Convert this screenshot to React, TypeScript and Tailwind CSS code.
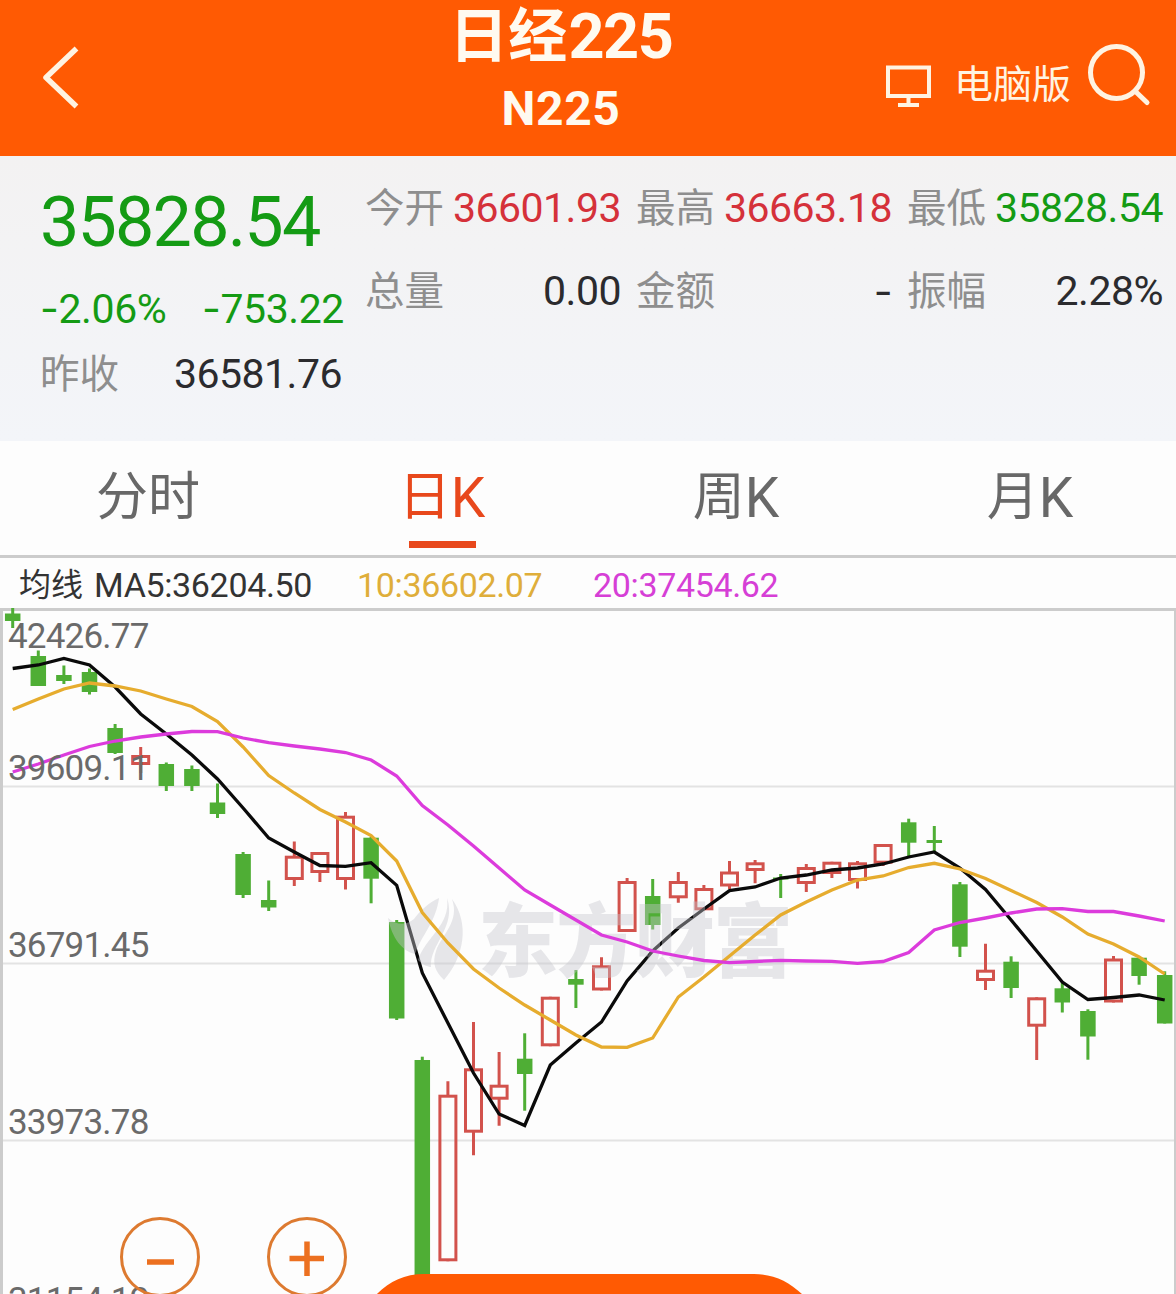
import { useState } from "react";
import clsx from "clsx";

type Candle = [high: number, top: number, bottom: number, low: number, rising?: boolean];

const STEP = 25.6;
const START = 12.7;
const CHART_TOP = 608;

const candles: Candle[] = [
  [608, 613.5, 621, 628],
  [650.5, 656, 686, 686],
  [665.5, 675, 681, 684],
  [668.5, 672, 692, 694.5],
  [724, 728, 753, 754],
  [747, 755, 765, 773, true],
  [762.5, 764, 786, 791],
  [765.5, 769, 786, 791],
  [783.5, 802.5, 814, 818],
  [852, 854, 895, 898],
  [880.5, 900, 907.5, 911],
  [841.5, 855.7, 880, 886, true],
  [852, 852, 873, 882, true],
  [812, 815.7, 880, 889.5, true],
  [837, 837.7, 878.7, 903.3],
  [920, 922, 1018.5, 1020],
  [1056.7, 1060, 1300, 1300],
  [1081.3, 1094.7, 1261.3, 1261.3, true],
  [1022, 1068.3, 1132.7, 1155.3, true],
  [1052, 1084.7, 1099.7, 1125.7, true],
  [1033.3, 1058.7, 1074, 1110.7],
  [996.7, 996.7, 1046.3, 1046.3, true],
  [970, 979, 984.7, 1008],
  [957.3, 965.3, 990.5, 990.5, true],
  [878, 881, 932, 932, true],
  [879, 896, 925, 929.5],
  [872, 881, 898.3, 902.7, true],
  [885, 888, 910.3, 910.3, true],
  [861, 871.5, 886.5, 889, true],
  [860, 862.3, 871, 883.3, true],
  [874, 877.5, 879.5, 898],
  [864, 867, 884, 892, true],
  [861.7, 861.7, 874, 878, true],
  [861, 862.3, 881, 888.5, true],
  [844, 844, 863.7, 866, true],
  [818.7, 822.3, 842.7, 857],
  [826, 840, 843, 852],
  [882, 884.3, 946.7, 957],
  [943.7, 969.7, 981, 990, true],
  [956.3, 961.7, 988, 998],
  [997.3, 997.3, 1026.7, 1060, true],
  [981.7, 988.3, 1002.5, 1012.5],
  [1009.3, 1011, 1036.5, 1059.7],
  [956, 958.5, 1002.5, 1002.5, true],
  [956.7, 957.7, 976, 984.7],
  [971.3, 975, 1023.5, 1023.5],
];

const ma5 = [
  668.5, 665, 658.5, 665, 687, 714, 734, 755, 779, 808, 838, 852, 865.5, 866.3, 862.7, 885.3, 973, 1023, 1073, 1114,
  1125.5, 1065, 1043, 1022, 981, 951, 928, 909, 890.7, 887, 878, 875, 870, 868, 864, 857, 852, 868, 889.5, 920, 951,
  982, 999.5, 997.5, 995, 1000,
];

const ma10 = [
  709.5, 699, 689, 683, 686, 691, 699, 706.5, 721.5, 747, 775.5, 793, 809.5, 822, 835.5, 861, 912.5, 943, 969, 988,
  1005, 1020, 1035, 1047, 1047.3, 1038, 997, 977, 956, 935, 915, 902, 890, 880, 876, 867.5, 863.3, 869, 878.5, 890.5,
  902.5, 917, 934, 944, 957, 974,
];

const ma20 = [
  772, 764, 755, 746.5, 741, 737, 734, 731.5, 731.7, 738, 742.7, 746, 749, 752.5, 760, 776, 805.5, 825, 846, 868, 890,
  905, 920, 935, 942, 951, 956, 960.5, 962.7, 961.5, 960.3, 961, 961.3, 963.3, 961.5, 952.5, 930, 922.5, 918, 913, 909,
  908.7, 911.5, 911.5, 916, 921,
];

const axisLabels = [
  { text: "42426.77", y: 648 },
  { text: "39609.11", y: 779.5 },
  { text: "36791.45", y: 957 },
  { text: "33973.78", y: 1134 },
  { text: "31154.12", y: 1311.5 },
];

const tabs = [
  { name: "分时" },
  { name: "日", suffix: "K" },
  { name: "周", suffix: "K" },
  { name: "月", suffix: "K" },
];

function xAt(i: number) {
  return START + i * STEP;
}

function toPoints(values: number[]) {
  return values.map((y, i) => `${xAt(i).toFixed(1)},${y}`).join(" ");
}

// Roboto's hyphen is too short for a minus sign, so it is set in Inter
function Num({ value }: { value: string }) {
  if (!value.startsWith("-")) {
    return <>{value}</>;
  }
  return (
    <>
      <span className="font-['Inter']">-</span>
      {value.slice(1)}
    </>
  );
}

function Header() {
  return (
    <header className="flex h-[156px] bg-[#ff5a03] text-[#fffaf0]">
      <div className="w-[338px] pt-[44px] pl-[40px]">
        <svg
          width="44"
          height="66"
          viewBox="0 0 44 66"
          fill="none"
          stroke="#fff3e2"
          strokeWidth="5.5"
          strokeLinejoin="round"
        >
          <path d="M36.500 4.500 6 33.500 36.500 62.500" />
        </svg>
      </div>
      <div className="flex w-[446px] flex-col items-center font-bold">
        <h1 className="flex h-[74px] items-center text-[59px] leading-[74px]">
          日经<span className="ml-[1px] text-[63px] tracking-[-1.4px]">225</span>
        </h1>
        <div className="h-[70px] text-[48px] leading-[70px] tracking-[0.6px]">N225</div>
      </div>
      <div className="flex flex-1 pl-[102px]">
        <svg className="mt-[64px]" width="46" height="44" viewBox="0 0 46 44" fill="none" stroke="#fff3e2" strokeWidth="4">
          <path d="M2 3.500h41v28.500H2zM22.500 32v9M12 41h21" />
        </svg>
        <span className="mt-[56px] ml-[22px] text-[39px] leading-[58px] text-[#fff3e2]">电脑版</span>
        <svg
          className="mt-[42px] ml-[15px]"
          width="66"
          height="66"
          viewBox="0 0 66 66"
          fill="none"
          stroke="#fff3e2"
          strokeWidth="5"
          strokeLinecap="round"
        >
          <circle cx="30.500" cy="30.500" r="26" />
          <path d="m49 49 12 11.500" />
        </svg>
      </div>
    </header>
  );
}

function Stat({ label, value, tone }: { label: string; value: string; tone?: "up" | "down" }) {
  return (
    <div className="flex h-[83px] items-center justify-between leading-[83px]">
      <span className="text-[39.500px] text-[#8e8e8e]">{label}</span>
      <span
        className={clsx(
          "text-[41px] tracking-[-0.5px]",
          tone === "up" && "text-[#d5313a]",
          tone === "down" && "text-[#149b14]",
          !tone && "text-[#2b2b2e]",
        )}
      >
        <Num value={value} />
      </span>
    </div>
  );
}

function Quote() {
  return (
    <section className="flex h-[285px] bg-linear-to-b from-[#f3f2f2] to-[#f3f5f9]">
      <div className="w-[365px] pl-[40px] text-[#149b14]">
        <div className="mt-[21px] h-[90px] text-[70px] leading-[90px] tracking-[-1.8px]">35828.54</div>
        <div className="flex h-[66px] w-[304px] items-center justify-between pt-[16px] text-[41px] leading-[50px] tracking-[-0.4px]">
          <span>
            <Num value="-2.06%" />
          </span>
          <span>
            <Num value="-753.22" />
          </span>
        </div>
        <div className="w-[302px]">
          <Stat label="昨收" value="36581.76" />
        </div>
      </div>
      <div className="grid h-[177px] w-[798px] grid-cols-3 gap-x-[15px] pt-[11px]">
        <Stat label="今开" value="36601.93" tone="up" />
        <Stat label="最高" value="36663.18" tone="up" />
        <Stat label="最低" value="35828.54" tone="down" />
        <Stat label="总量" value="0.00" />
        <Stat label="金额" value="-" />
        <Stat label="振幅" value="2.28%" />
      </div>
    </section>
  );
}

function Chart() {
  return (
    <svg className="block" width="1176" height="686" viewBox={`0 ${CHART_TOP} 1176 686`} fill="none">
      <path d="M0 609.500H1176" stroke="#cccccc" strokeWidth="3" />
      <path d="M1.500 608V1294M1175.500 608V1294" stroke="#cccccc" strokeWidth="3" />
      <path d="M3 786.500H1174M3 963.500H1174M3 1140.500H1174" stroke="#e3e3e3" strokeWidth="2" />
      {candles.map(([high, top, bottom, low, rising], i) => {
        const x = xAt(i);
        if (rising) {
          return (
            <g key={i} stroke="#d2524c" strokeWidth="3">
              <path d={`M${x} ${high}V${top + 1}M${x} ${bottom - 1}V${low}`} />
              <rect x={x - 8} y={top + 1.5} width="16" height={bottom - top - 3} />
            </g>
          );
        }
        return (
          <g key={i} fill="#4fae35">
            <rect x={x - 1.5} y={high} width="3" height={low - high} />
            <rect x={x - 7.75} y={top} width="15.500" height={bottom - top} />
          </g>
        );
      })}
      <polyline points={toPoints(ma5)} stroke="#0a0a0a" strokeWidth="3.300" />
      <g fill="#c6c6cc" fillOpacity="0.42">
        <path d="M439 898C428 903 420 911 414 919C406 926 396 925 388 918C392 938 402 951 415 954C421 936 436 922 439 898Z" />
        <path d="M447 898C451 925 425 938 418 960C423 965 428 967 431 967C429 945 457 927 447 898Z" />
        <path d="M452 899C470 924 464 957 444 980C435 971 432 964 436 951C442 934 460 922 452 899Z" />
        <text
          x="478"
          y="970"
          fontSize="80"
          fontWeight="800"
          textLength="315"
          className="font-['Noto_Sans_CJK_SC',sans-serif]"
        >
          东方财富
        </text>
      </g>
      <polyline points={toPoints(ma10)} stroke="#e6ac2e" strokeWidth="3.300" />
      <polyline points={toPoints(ma20)} stroke="#dc3bdc" strokeWidth="3.300" />
      {axisLabels.map((label) => (
        <text key={label.text} x="8" y={label.y} fontSize="35" letterSpacing="-0.8" fill="#6a6a6a">
          {label.text}
        </text>
      ))}
      <g stroke="#dd7a30" strokeWidth="3">
        <circle cx="160" cy="1257" r="38.500" />
        <circle cx="307" cy="1257" r="38.500" />
      </g>
      <path d="M147 1262H174M289.500 1258.500H324M307 1241.500V1276" stroke="#ec7020" strokeWidth="5.500" />
      <path d="M375 1296C388 1282 404 1274 424 1274H754C774 1274 790 1282 804 1296Z" fill="#ff5a03" />
    </svg>
  );
}

export default function App() {
  const [active, setActive] = useState(1);

  return (
    <main className="h-[1294px] w-[1176px] overflow-hidden bg-[#fdfdfd] font-['Roboto','Noto_Sans_CJK_SC',sans-serif]">
      <Header />
      <Quote />
      <nav className="grid h-[114px] grid-cols-4">
        {tabs.map((tab, i) => (
          <button
            key={tab.name}
            type="button"
            onClick={() => setActive(i)}
            className={clsx(
              "flex flex-col items-center pl-[2px] text-[52px] leading-[100px]",
              i === active ? "text-[#e8481c]" : "text-[#686868]",
            )}
          >
            <span className="flex h-[100px] pt-[7px]">
              {tab.name}
              {tab.suffix ? <span className="text-[55px]">{tab.suffix}</span> : null}
            </span>
            {i === active ? <span className="h-[7px] w-[67px] bg-[#e8481c]" /> : null}
          </button>
        ))}
      </nav>
      <div className="flex h-[53px] items-center border-t-[3px] border-[#cccccc] pt-[4px] pl-[19px] text-[34px] leading-[46px] tracking-[-0.35px] text-[#333]">
        <span className="w-[75px] text-[32px] tracking-normal">均线</span>
        <span className="w-[263px]">MA5:36204.50</span>
        <span className="w-[236px] text-[#dfae3a]">10:36602.07</span>
        <span className="text-[#d63fd6]">20:37454.62</span>
      </div>
      <Chart />
    </main>
  );
}
